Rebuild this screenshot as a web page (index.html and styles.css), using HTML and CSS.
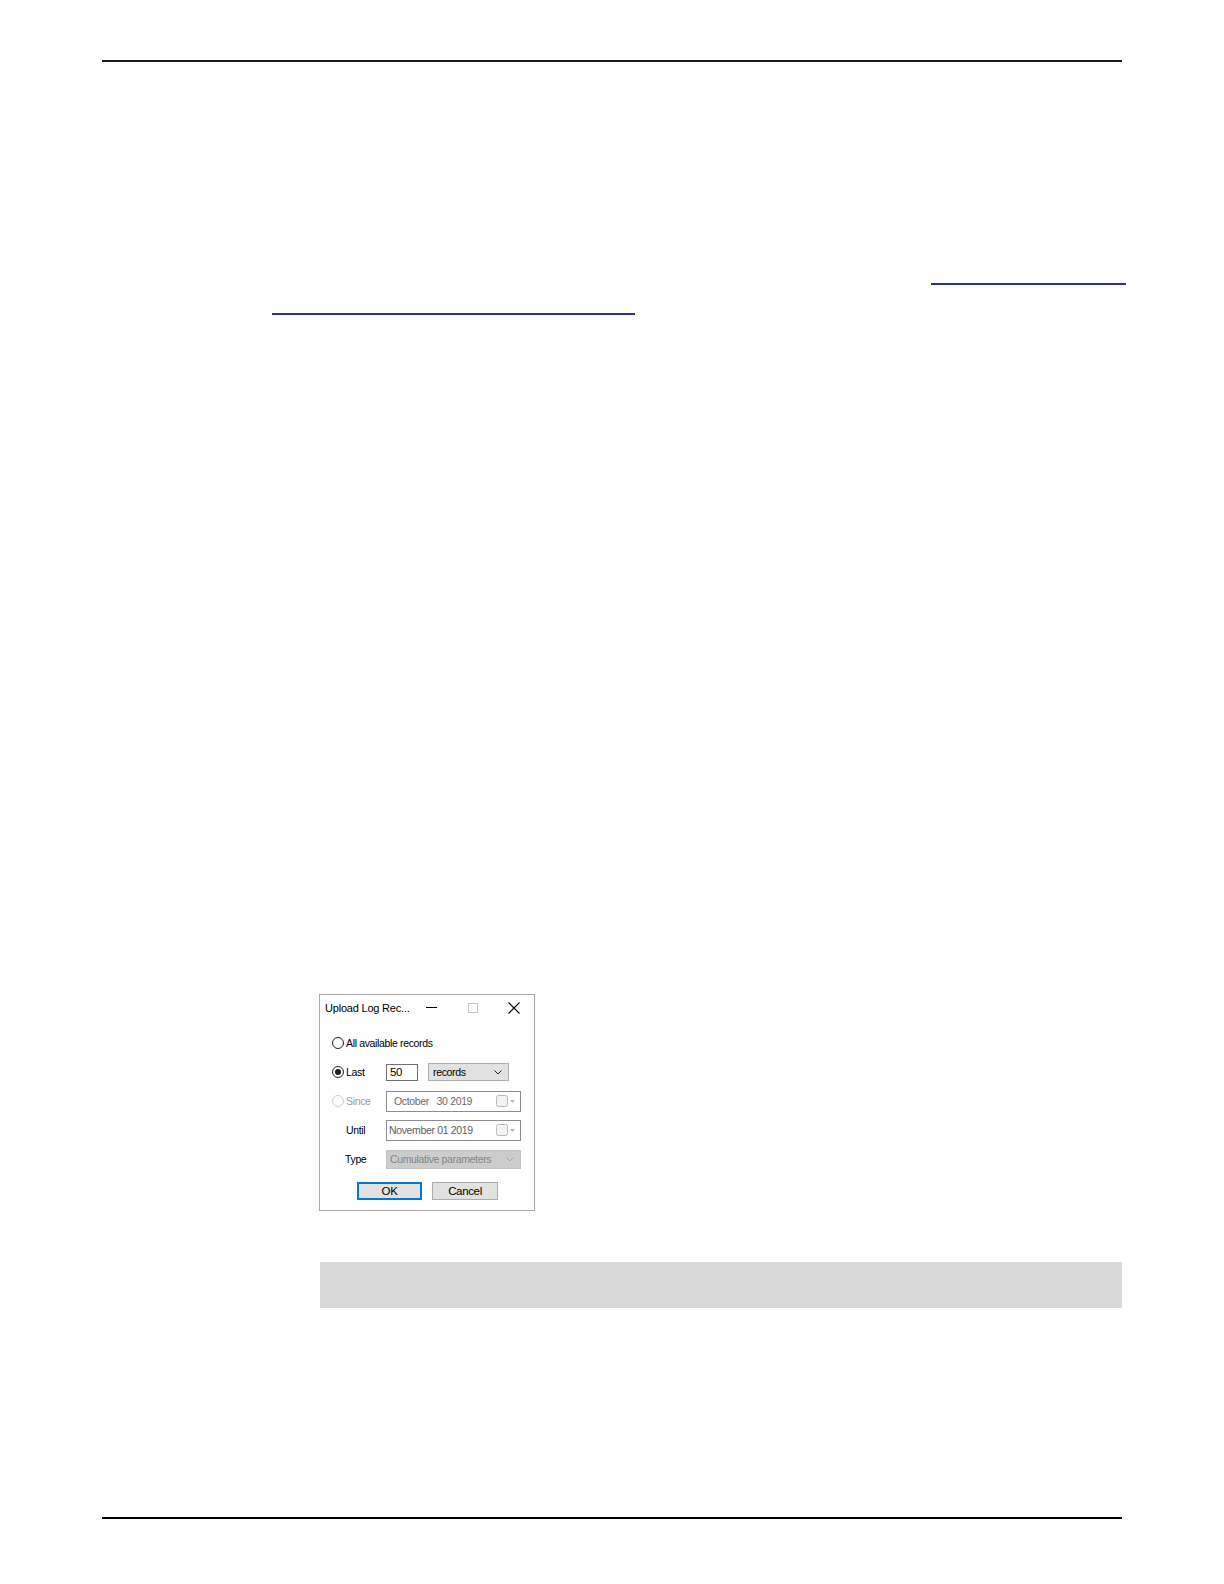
FILE: index.html
```html
<!DOCTYPE html>
<html lang="en">
<head>
<meta charset="utf-8">
<title>Upload Log Records</title>
<link rel="stylesheet" href="styles.css">
</head>
<body>
<div class="page">
  <div class="rule-top"></div>
  <div class="link-line l1"></div>
  <div class="link-line l2"></div>

  <div class="dialog">
    <div class="titlebar">
      <div class="title">Upload Log Rec...</div>
      <div class="tb-btn">
        <svg width="11" height="3" viewBox="0 0 11 3"><path d="M0 1.5 H11" stroke="#000" stroke-width="1"/></svg>
      </div>
      <div class="tb-btn">
        <svg width="10" height="10" viewBox="0 0 10 10"><rect x="0.5" y="0.5" width="9" height="9" fill="none" stroke="#c4c4c4" stroke-width="1"/></svg>
      </div>
      <div class="tb-btn">
        <svg width="12" height="12" viewBox="0 0 12 12"><path d="M0.5 0.5 L11.5 11.5 M11.5 0.5 L0.5 11.5" stroke="#000" stroke-width="1.1"/></svg>
      </div>
    </div>

    <div class="body">
      <div class="row">
        <span class="radio"></span><span class="lbl">All available records</span>
      </div>
      <div class="row">
        <div class="lead"><span class="radio checked"></span><span class="lbl">Last</span></div>
        <div class="num">50</div>
        <div class="combo">
          <span>records</span>
          <svg width="8" height="5" viewBox="0 0 8 5"><path d="M0.5 0.5 L4 4 L7.5 0.5" fill="none" stroke="#222" stroke-width="1"/></svg>
        </div>
      </div>
      <div class="row">
        <div class="lead"><span class="radio disabled"></span><span class="lbl dim">Since</span></div>
        <div class="date">
          <span class="date-text since">October&nbsp;&nbsp;&nbsp;30 2019</span>
          <svg class="cal" width="20" height="13" viewBox="0 0 20 13"><rect x="0.5" y="0.5" width="11" height="11" rx="2" fill="#f3f3f3" stroke="#b8b8b8"/><path d="M14 5 H19 L16.5 8 Z" fill="#b4b4b4"/></svg>
        </div>
      </div>
      <div class="row">
        <div class="lead"><span class="lbl plain until">Until</span></div>
        <div class="date">
          <span class="date-text">November 01 2019</span>
          <svg class="cal" width="20" height="13" viewBox="0 0 20 13"><rect x="0.5" y="0.5" width="11" height="11" rx="2" fill="#f3f3f3" stroke="#b8b8b8"/><path d="M14 5 H19 L16.5 8 Z" fill="#b4b4b4"/></svg>
        </div>
      </div>
      <div class="row">
        <div class="lead"><span class="lbl plain type">Type</span></div>
        <div class="combo wide off">
          <span>Cumulative parameters</span>
          <svg width="8" height="5" viewBox="0 0 8 5"><path d="M0.5 0.5 L4 4 L7.5 0.5" fill="none" stroke="#a9a9a9" stroke-width="1"/></svg>
        </div>
      </div>
      <div class="buttons">
        <div class="btn default">OK</div>
        <div class="btn">Cancel</div>
      </div>
    </div>
  </div>

  <div class="note"></div>
  <div class="rule-bottom"></div>
</div>
</body>
</html>
```

FILE: styles.css
```css
html, body {
  margin: 0;
  padding: 0;
  background: #ffffff;
}

.page {
  width: 1020px;
  margin-left: 102px;
}

.rule-top {
  margin-top: 60px;
  border-top: 2px solid #1a1a1a;
}

.link-line {
  height: 0;
  border-top: 2px solid #2b2ba3;
}

.link-line.l1 {
  margin-top: 221px;
  margin-left: 829px;
  width: 195px;
}

.link-line.l2 {
  margin-top: 28px;
  margin-left: 170px;
  width: 363px;
}

/* ---------- dialog ---------- */
.dialog {
  margin-top: 679px;
  margin-left: 217px;
  width: 216px;
  height: 217px;
  box-sizing: border-box;
  border: 1px solid #a9a9a9;
  background: #ffffff;
  font-family: "Liberation Sans", Arial, sans-serif;
  font-size: 10.5px;
  letter-spacing: -0.35px;
  color: #000;
}

.titlebar {
  height: 25px;
  display: flex;
  align-items: center;
}

.title {
  flex: 1;
  padding-left: 5px;
  font-size: 11px;
  letter-spacing: -0.2px;
  white-space: nowrap;
  overflow: hidden;
}

.tb-btn {
  width: 41px;
  height: 25px;
  display: flex;
  align-items: center;
  justify-content: center;
}

.body {
  padding-top: 12px;
  display: flex;
  flex-direction: column;
  gap: 7px;
}

.row {
  height: 22px;
  display: flex;
  align-items: center;
  padding-left: 12px;
}

.lead {
  width: 54px;
  flex-shrink: 0;
  display: flex;
  align-items: center;
}

.radio {
  width: 12px;
  height: 12px;
  box-sizing: border-box;
  border: 1px solid #1f1f1f;
  border-radius: 50%;
  margin-right: 2px;
  flex-shrink: 0;
  display: flex;
  align-items: center;
  justify-content: center;
  background: #fff;
}

.radio.checked::after {
  content: "";
  width: 6px;
  height: 6px;
  border-radius: 50%;
  background: #1f1f1f;
}

.radio.disabled {
  border-color: #cdcdcd;
}

.lbl {
  white-space: nowrap;
}

.lbl.dim {
  color: #9a9a9a;
}

.lbl.until {
  padding-left: 14px;
}

.lbl.type {
  padding-left: 13px;
}

.num {
  width: 32px;
  height: 17px;
  box-sizing: border-box;
  border: 1px solid #6f6f6f;
  padding-left: 3px;
  font-size: 11.5px;
  line-height: 15px;
  background: #fff;
}

.combo {
  margin-left: 10px;
  width: 81px;
  height: 18px;
  box-sizing: border-box;
  border: 1px solid #adadad;
  background: #e1e1e1;
  display: flex;
  align-items: center;
  justify-content: space-between;
  padding: 0 6px 0 4px;
}

.combo.wide {
  margin-left: 0;
  width: 135px;
  height: 19px;
  padding-left: 3px;
}

.combo.off {
  background: #cccccc;
  border-color: #c2c2c2;
  color: #858585;
}

.date {
  width: 135px;
  height: 21px;
  box-sizing: border-box;
  border: 1px solid #8e8e8e;
  background: #fff;
  display: flex;
  align-items: center;
  justify-content: space-between;
  padding: 0 4px 0 2px;
}

.date-text {
  color: #5e5e5e;
  white-space: nowrap;
}

.date-text.since {
  padding-left: 5px;
  color: #6a6a6a;
}

.cal {
  flex-shrink: 0;
}

.buttons {
  margin-top: 5px;
  display: flex;
  gap: 10px;
  padding-left: 37px;
}

.btn {
  width: 66px;
  height: 18px;
  box-sizing: border-box;
  border: 1px solid #adadad;
  background: #e1e1e1;
  display: flex;
  align-items: center;
  justify-content: center;
  font-size: 11.5px;
}

.btn.default {
  width: 65px;
  border-color: #0078d7;
  box-shadow: inset 0 0 0 1px #0078d7;
}

/* ---------- below ---------- */
.note {
  margin-top: 51px;
  margin-left: 218px;
  width: 802px;
  height: 46px;
  background: #dadada;
}

.rule-bottom {
  margin-top: 209px;
  border-top: 2px solid #000;
}
```
